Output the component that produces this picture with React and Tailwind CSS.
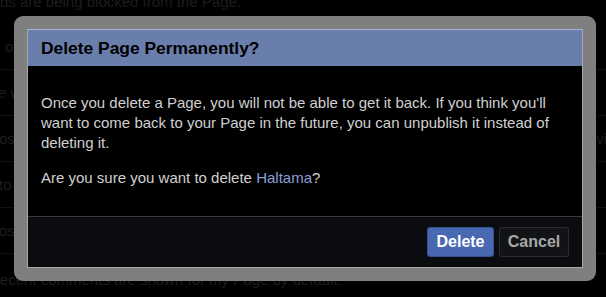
const rows = [
  { left: "off", pad: "pl-[5px]", right: "" },
  { left: "e will be reviewed", pad: "-ml-[2px]", right: "" },
  { left: "osts by others on the Page", pad: "-ml-[1px]", right: "revi" },
  { left: "to whom the Page is visible", pad: "-ml-[1px]", right: "" },
  { left: "osts and comments filtered", pad: "-ml-[1px]", right: "" },
];

const App = () => {
  return (
    <div className="relative w-[606px] h-[297px] overflow-hidden bg-black font-['Liberation_Sans',Arial,sans-serif]">
      {/* Page behind the dialog */}
      <div className="text-[15px] leading-[20px] text-[#1d1d1d]">
        <div className="-mt-[8px] h-[32px]">ds are being blocked from the Page.</div>
        {rows.map((row, i) => (
          <div key={i} className="h-[46px] flex items-center justify-between border-b border-[#111111]">
            <span className={row.pad}>{row.left}</span>
            <span className="-mr-[1px]">{row.right}</span>
          </div>
        ))}
        <div className="mt-[16px] -ml-[11px]">Recent comments are shown for my Page by default.</div>
      </div>

      {/* Dialog */}
      <div className="absolute left-[14px] top-[16px] w-[582px] rounded-[9px] bg-[#7f7f7f] p-[13px]">
        <div className="border border-[#a8a8a8] border-t-[#a3b3dd] bg-black">
          <div className="h-[36px] flex items-center px-[13px] bg-[#6a7eab]">
            <h2 className="text-[17.4px] font-bold text-black">Delete Page Permanently?</h2>
          </div>

          <div className="px-[13px] pt-[27px] pb-[28px] text-[15px] leading-[20px] text-[#d0d0d0]">
            <p>
              Once you delete a Page, you will not be able to get it back. If you think you'll want to
              come back to your Page in the future, you can unpublish it instead of deleting it.
            </p>
            <p className="mt-[15px]">
              Are you sure you want to delete <span className="text-[#8c9fd6]">Haltama</span>?
            </p>
          </div>

          <div className="h-[51px] border-t border-[#3a3a3c] bg-[#0b0c0f] flex items-center justify-end gap-[5px] pr-[13px]">
            <button className="h-[30px] w-[67px] rounded-[3px] border border-[#33528f] bg-[#4868b1] text-[16px] font-bold text-white">
              Delete
            </button>
            <button className="h-[30px] w-[70px] rounded-[3px] border border-[#2c2d31] bg-[#121316] text-[16px] font-bold text-[#a8a8a8]">
              Cancel
            </button>
          </div>
        </div>
      </div>
    </div>
  );
};

export default App;
